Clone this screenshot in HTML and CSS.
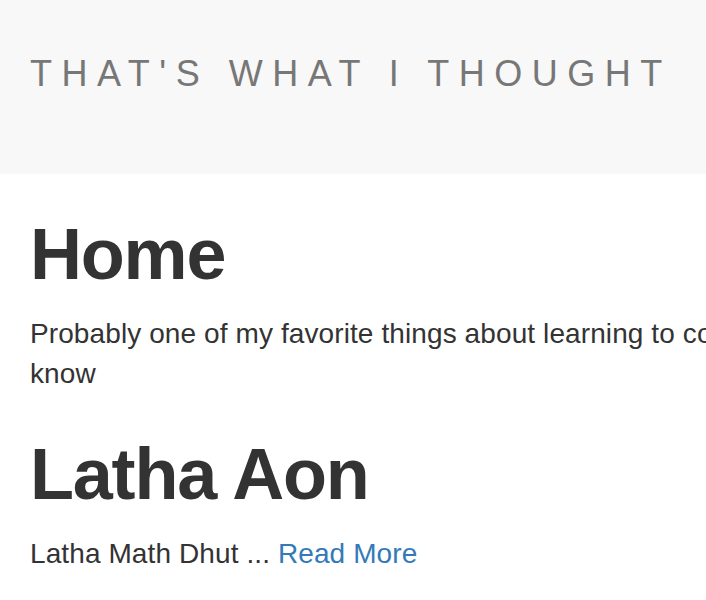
FILE: index.html
```html
<!DOCTYPE html>
<html lang="en">
<head>
<meta charset="utf-8">
<title>That's What I Thought</title>
<link rel="stylesheet" href="styles.css">
</head>
<body>
<header class="site-header">
  <a class="brand" href="#">That's What I Thought</a>
</header>
<main class="container">
  <h1 class="page-title">Home</h1>
  <p class="lead-text">Probably one of my favorite things about learning to code is that there is always something new to know</p>
  <article class="post">
    <h1 class="post-title">Latha Aon</h1>
    <p class="post-excerpt">Latha Math Dhut ... <a class="read-more" href="#">Read More</a></p>
  </article>
</main>
</body>
</html>
```

FILE: styles.css
```css
html, body {
  margin: 0;
  padding: 0;
  overflow-x: hidden;
  background: #ffffff;
}

body {
  font-family: "Liberation Sans", Arial, Helvetica, sans-serif;
  font-size: 28px;
  line-height: 40px;
  color: #333333;
}

.site-header {
  box-sizing: border-box;
  height: 174px;
  padding: 54px 30px 0 30px;
  background: #f8f8f8;
}

.brand {
  display: block;
  font-size: 36px;
  line-height: 40px;
  letter-spacing: 9.5px;
  text-transform: uppercase;
  color: #777777;
  text-decoration: none;
  white-space: nowrap;
}

.container {
  width: 1265px;
  padding: 0 30px;
}

.page-title,
.post-title {
  font-size: 72px;
  font-weight: 700;
  line-height: 1.1;
  letter-spacing: -1.2px;
  margin: 41px 0 20px 0;
}

.lead-text,
.post-excerpt {
  margin: 0 0 20px 0;
  letter-spacing: 0.1px;
}

.read-more {
  color: #337ab7;
  text-decoration: none;
}
```
